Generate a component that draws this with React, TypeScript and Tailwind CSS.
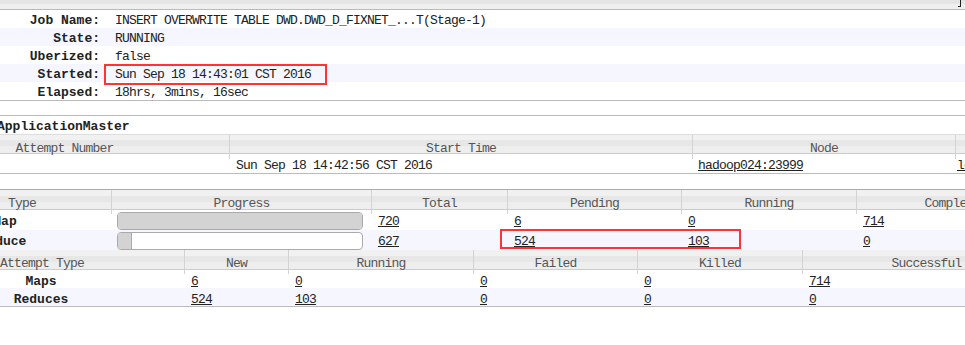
import { FC, ReactNode } from "react";

const hdr =
  "bg-[linear-gradient(to_bottom,#f1f1f1_0%,#f1f1f1_30%,#e7e7e7_30%,#e7e7e7_62%,#eeeeee_62%,#eeeeee_100%)] text-[#555]";

const info: [string, string][] = [
  ["Job Name:", "INSERT OVERWRITE TABLE DWD.DWD_D_FIXNET_...T(Stage-1)"],
  ["State:", "RUNNING"],
  ["Uberized:", "false"],
  ["Started:", "Sun Sep 18 14:43:01 CST 2016"],
  ["Elapsed:", "18hrs, 3mins, 16sec"],
];

const Lnk: FC<{ children: ReactNode }> = ({ children }) => (
  <a className="underline underline-offset-[1px] text-[#222] cursor-pointer">{children}</a>
);

const HeadCell: FC<{ children?: ReactNode; first?: boolean }> = ({ children, first }) => (
  <div
    className={`h-full flex items-center justify-center pt-[4px] tracking-[-0.8px] ${
      first ? "" : "border-l border-[#d3d3d3]"
    }`}
  >
    {children}
  </div>
);

const App: FC = () => {
  return (
    <div className="relative w-[965px] h-[345px] overflow-hidden bg-white text-[13px] text-[#222] font-['Liberation_Mono',monospace]">
      {/* top strip */}
      <div className="h-[10px] border-b border-[#bbb] bg-[linear-gradient(to_bottom,#e5e5e5_0%,#e5e5e5_45%,#efefef_45%)] flex justify-end">
        <div className="w-[3px] h-[7px] border-r border-b border-[#222] mr-[4px]" />
      </div>

      {/* job info */}
      <div className="border-b border-[#bbb]">
        {info.map(([k, v], i) => (
          <div key={k} className={`flex h-[18px] items-center pt-[4px] ${i % 2 ? "bg-[#f5f6ff]" : "bg-white"}`}>
            <div className="w-[100px] text-right font-bold leading-[18px]">{k}</div>
            <div className="pl-[15px] tracking-[-0.8px] leading-[18px] whitespace-nowrap">{v}</div>
          </div>
        ))}
      </div>

      {/* ApplicationMaster */}
      <div className="mt-[14px] border-t border-[#bbb] overflow-hidden">
        <div className="h-[18px] flex items-center pt-[3px] font-bold -ml-[3px]">ApplicationMaster</div>
        <div className="ml-[-100px] w-[1300px]">
          <div className={`grid grid-cols-[329px_463px_263px_245px] h-[20px] border-t border-[#ddd] border-b border-b-[#ccc] ${hdr}`}>
            <HeadCell first>Attempt Number</HeadCell>
            <HeadCell>Start Time</HeadCell>
            <HeadCell>Node</HeadCell>
            <HeadCell>Logs</HeadCell>
          </div>
          <div className="grid grid-cols-[329px_463px_263px_245px] h-[20px] items-center pt-[2px] border-b border-[#bbb] tracking-[-0.8px]">
            <div />
            <div className="pl-[7px] whitespace-nowrap">Sun Sep 18 14:42:56 CST 2016</div>
            <div className="pl-[6px]">
              <Lnk>hadoop024:23999</Lnk>
            </div>
            <div className="pl-[2px]">
              <Lnk>logs</Lnk>
            </div>
          </div>
        </div>
      </div>

      {/* task summary */}
      <div className="mt-[15px] border-t border-[#aaa] overflow-hidden">
        <div className="ml-[-67px] w-[1200px]">
          <div className={`grid grid-cols-[178px_260px_136px_174px_175px_192px] h-[20px] border-b border-[#ccc] ${hdr}`}>
            <HeadCell first>Type</HeadCell>
            <HeadCell>Progress</HeadCell>
            <HeadCell>Total</HeadCell>
            <HeadCell>Pending</HeadCell>
            <HeadCell>Running</HeadCell>
            <HeadCell>Complete</HeadCell>
          </div>
          {[
            { t: "Map", pr: "pr-[34px]", fill: "w-full", v: ["720", "6", "0", "714"], bg: "bg-white" },
            { t: "Reduce", pr: "pr-[38px]", fill: "w-[14px] border-r border-[#aaa]", v: ["627", "524", "103", "0"], bg: "bg-[#f5f6ff]" },
          ].map((r) => (
            <div key={r.t} className={`grid grid-cols-[178px_260px_136px_174px_175px_192px] h-[20px] ${r.bg}`}>
              <div className={`flex items-center justify-center pt-[2px] font-bold ${r.pr}`}>{r.t}</div>
              <div className="pl-[6px] pr-[8px] pt-[2px]">
                <div className="h-[18px] rounded-[4px] border border-[#aaa] bg-white overflow-hidden">
                  <div className={`h-full bg-[#d3d3d3] ${r.fill}`} />
                </div>
              </div>
              {r.v.map((n, j) => (
                <div key={j} className="flex items-center pt-[1px] pl-[7px] tracking-[-0.8px]">
                  <Lnk>{n}</Lnk>
                </div>
              ))}
            </div>
          ))}
        </div>
      </div>

      {/* attempt summary */}
      <div className="overflow-hidden border-b border-[#bbb]">
        <div className="ml-[-100px] w-[1200px]">
          <div className={`grid grid-cols-[284px_104px_185px_164px_165px_248px] h-[20px] border-b border-[#ccc] ${hdr}`}>
            <HeadCell first>Attempt Type</HeadCell>
            <HeadCell>New</HeadCell>
            <HeadCell>Running</HeadCell>
            <HeadCell>Failed</HeadCell>
            <HeadCell>Killed</HeadCell>
            <HeadCell>Successful</HeadCell>
          </div>
          {[
            { t: "Maps", v: ["6", "0", "0", "0", "714"], bg: "bg-white" },
            { t: "Reduces", v: ["524", "103", "0", "0", "0"], bg: "bg-[#f5f6ff]" },
          ].map((r) => (
            <div key={r.t} className={`grid grid-cols-[284px_104px_185px_164px_165px_248px] h-[18px] items-center pt-[2px] ${r.bg}`}>
              <div className="text-center font-bold pr-[2px]">{r.t}</div>
              {r.v.map((n, j) => (
                <div key={j} className="pl-[7px] tracking-[-0.8px]">
                  <Lnk>{n}</Lnk>
                </div>
              ))}
            </div>
          ))}
        </div>
      </div>

      {/* red annotation boxes */}
      <div className="absolute left-[104px] top-[64px] w-[223px] h-[21px] border-2 border-[#f33]" />
      <div className="absolute left-[500px] top-[229px] w-[241px] h-[20px] border-2 border-[#f33]" />
    </div>
  );
};

export default App;
